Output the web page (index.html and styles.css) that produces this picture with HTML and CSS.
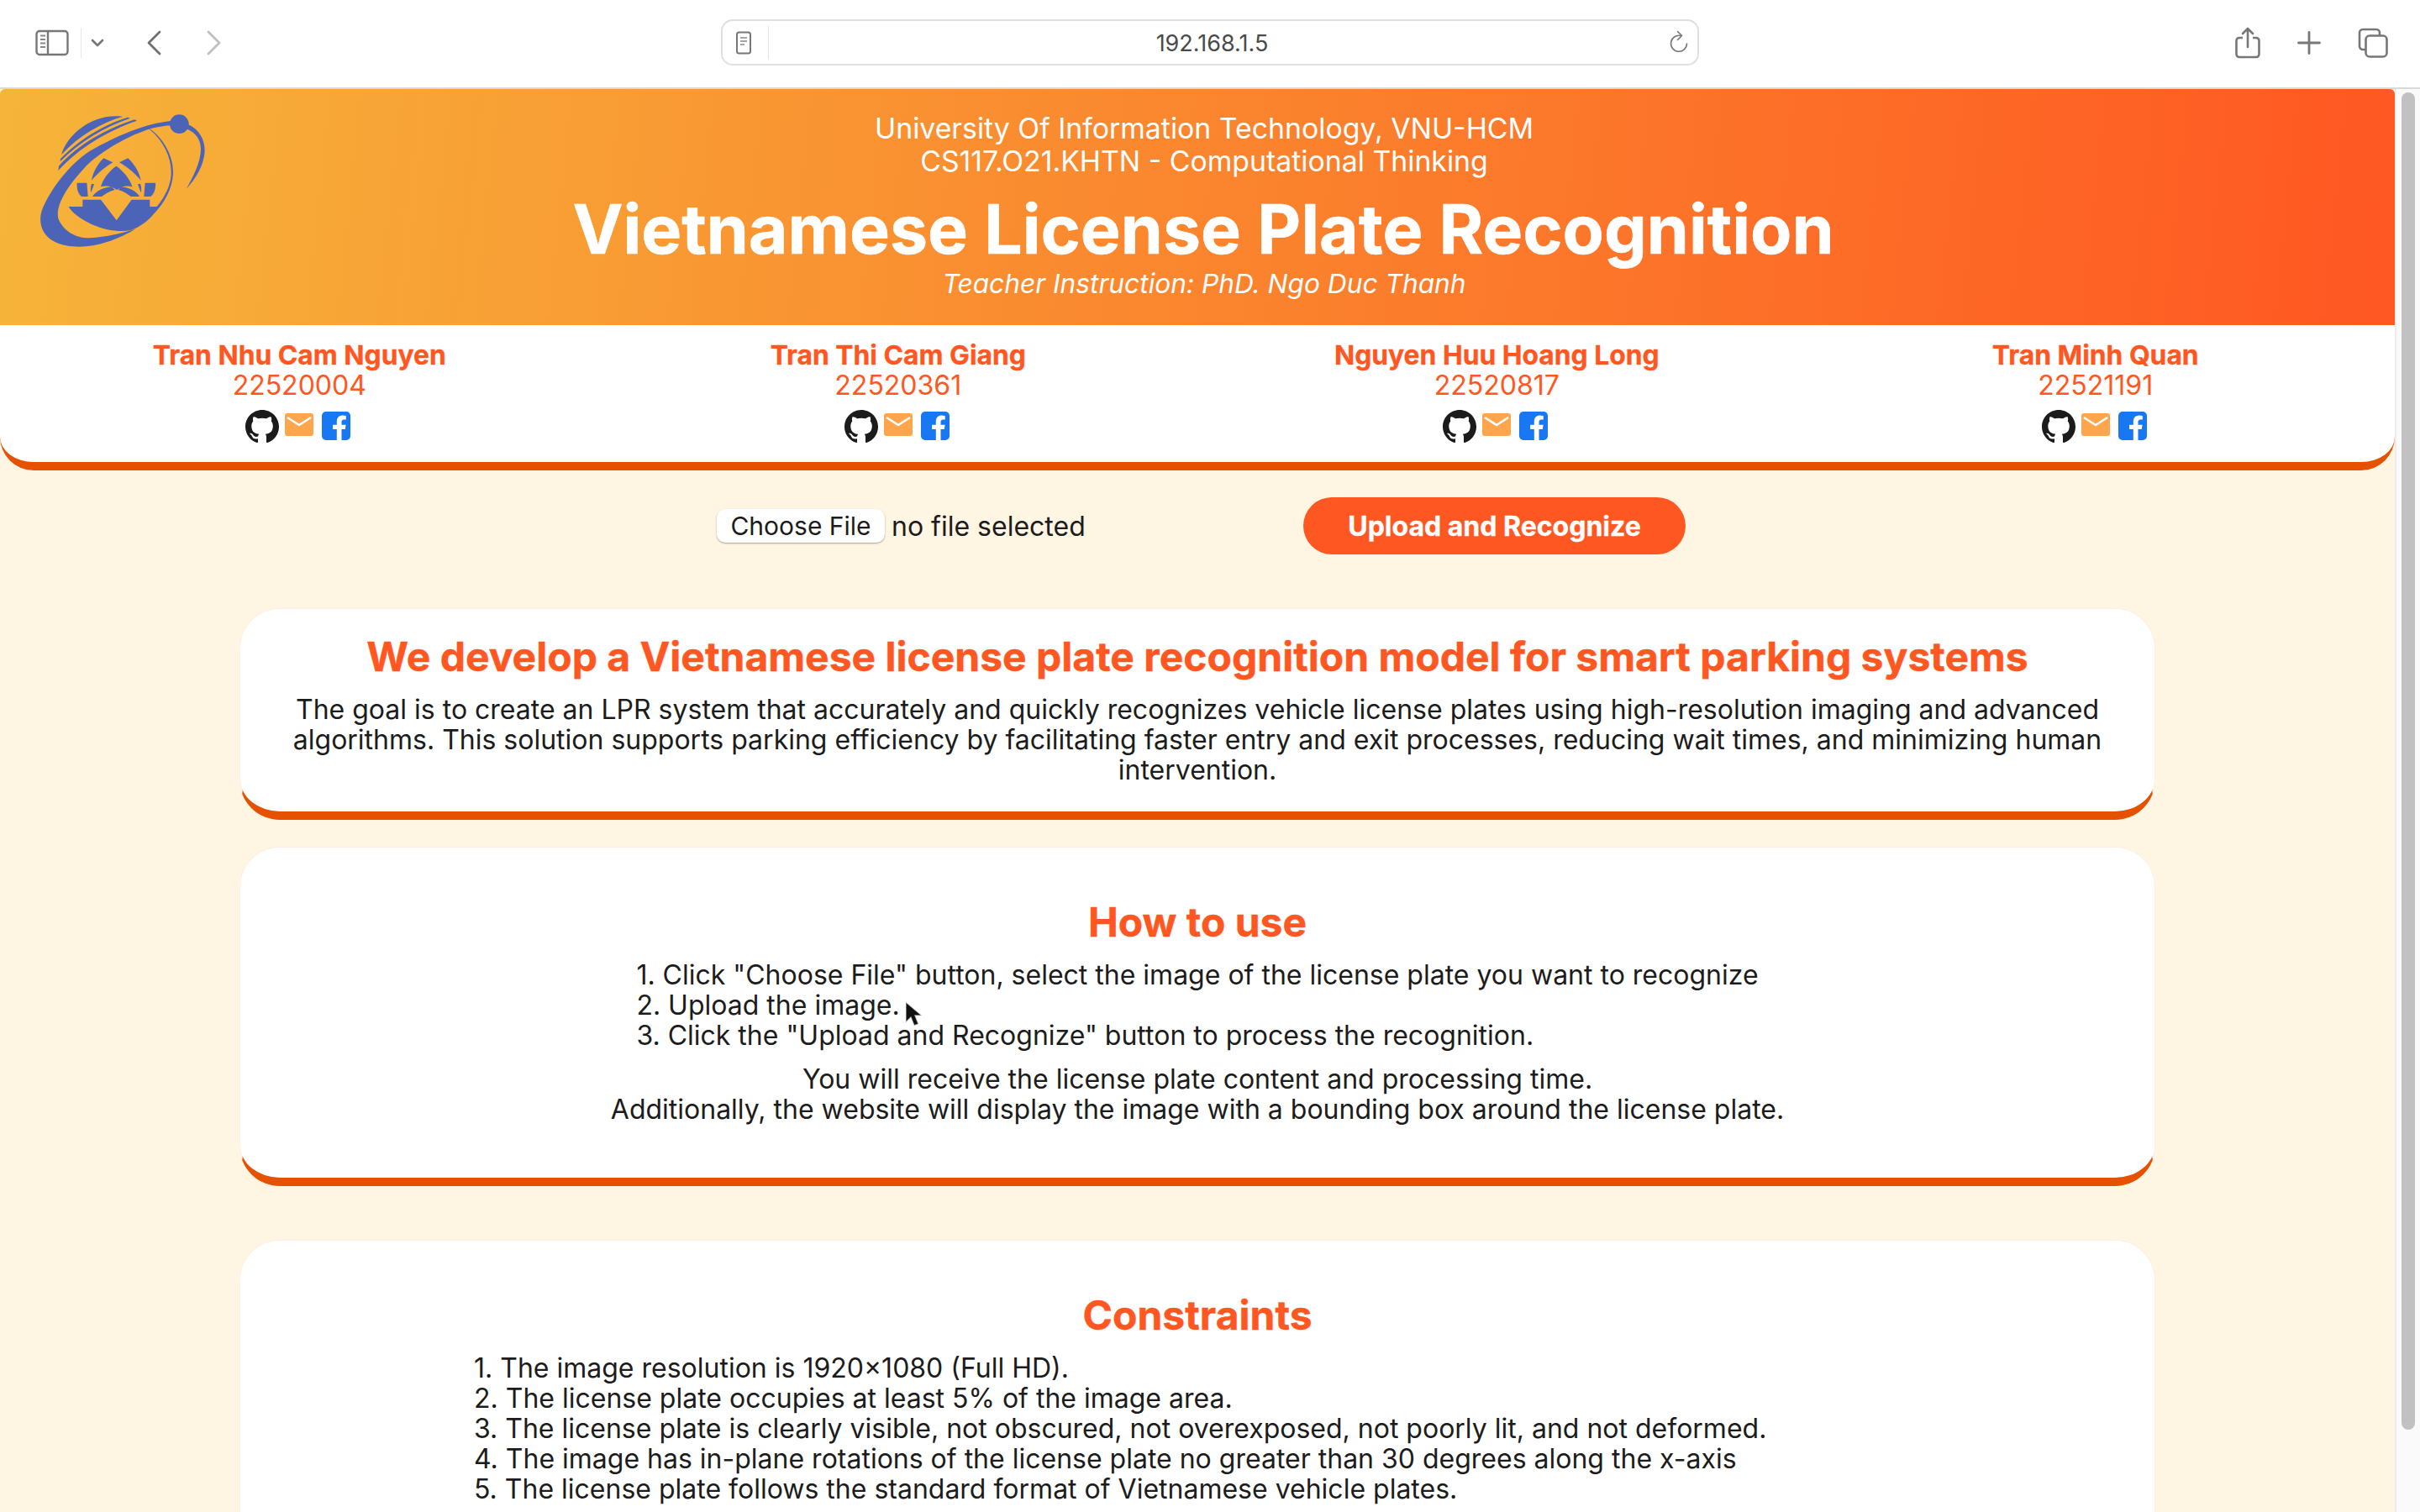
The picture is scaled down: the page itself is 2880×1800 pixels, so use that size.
FILE: index.html
```html
<!DOCTYPE html>
<html lang="en">
<head>
<meta charset="utf-8">
<title>Vietnamese License Plate Recognition</title>
<link rel="stylesheet" href="styles.css">
</head>
<body>
<div class="window">
  <div class="toolbar">
    <div class="tb-left">
      <svg class="ico-side" width="40" height="32" viewBox="0 0 40 32"><rect x="1.5" y="2" width="37" height="28" rx="3.5" fill="none" stroke="#777" stroke-width="2.4"/><path d="M15 2v28" stroke="#777" stroke-width="2.4"/><path d="M6 7.5h6M6 12h6M6 16.5h6M6 21h6" stroke="#888" stroke-width="1.8"/></svg>
      <span class="tb-sep"></span>
      <svg class="ico-chev" width="16" height="12" viewBox="0 0 16 12"><path d="M2 3l6 6 6-6" fill="none" stroke="#777" stroke-width="2.6" stroke-linecap="round" stroke-linejoin="round"/></svg>
      <svg class="ico-back" width="18" height="30" viewBox="0 0 18 30"><path d="M16 2L3 15l13 13" fill="none" stroke="#707070" stroke-width="2.8" stroke-linecap="round" stroke-linejoin="round"/></svg>
      <svg class="ico-fwd" width="18" height="30" viewBox="0 0 18 30"><path d="M2 2l13 13L2 28" fill="none" stroke="#c0c0c0" stroke-width="2.8" stroke-linecap="round" stroke-linejoin="round"/></svg>
    </div>
    <div class="urlbar">
      <svg class="ico-reader" width="18" height="28" viewBox="0 0 18 28"><rect x="1" y="1.5" width="16" height="25" rx="2.5" fill="none" stroke="#777" stroke-width="2"/><path d="M5 8h8M5 12h8M5 16h5" stroke="#888" stroke-width="1.5"/></svg>
      <span class="url-sep"></span>
      <span class="url-text">192.168.1.5</span>
      <svg class="ico-reload" width="24" height="30" viewBox="0 0 24 30"><path d="M14 6.5a9.5 9.5 0 1 0 7.5 9.5" fill="none" stroke="#777" stroke-width="1.6" stroke-linecap="round"/><path d="M10.5 1.5l5 5-5 5" fill="none" stroke="#777" stroke-width="1.6" stroke-linecap="round" stroke-linejoin="round"/></svg>
    </div>
    <div class="tb-right">
      <svg width="30" height="38" viewBox="0 0 30 38"><path d="M9 13H5a3.500 3.500 0 0 0-3.500 3.500v16A3.500 3.500 0 0 0 5 36h20a3.500 3.500 0 0 0 3.500-3.500v-16A3.500 3.500 0 0 0 25 13h-4" fill="none" stroke="#777" stroke-width="2.600"/><path d="M15 24V2M9 8l6-6 6 6" fill="none" stroke="#777" stroke-width="2.600" stroke-linecap="round" stroke-linejoin="round"/></svg>
      <svg width="28" height="28" viewBox="0 0 28 28"><path d="M14 1.500v25M1.500 14h25" stroke="#777" stroke-width="2.800" stroke-linecap="round"/></svg>
      <svg width="36" height="36" viewBox="0 0 36 36"><path d="M9 26H6a4 4 0 0 1-4-4V6a4 4 0 0 1 4-4h16a4 4 0 0 1 4 4v3" fill="none" stroke="#777" stroke-width="2.600"/><rect x="9.500" y="9.500" width="25" height="25" rx="4.500" fill="none" stroke="#777" stroke-width="2.600"/></svg>
    </div>
  </div>
  <div class="viewport">
    <main class="page">
      <header class="banner">
        <svg class="logo" viewBox="0 0 660 540" width="220" height="180">
          <g fill="#4b64b8">
            <path d="M490 57C400 66 300 108 200 165 130 210 60 300 30 375 15 420 30 465 75 488 125 513 200 510 260 490 300 478 340 458 365 442 320 458 260 472 200 475 150 476 105 450 88 405 78 360 115 295 190 215 250 160 340 108 420 84 455 76 475 74 490 73Z"/>
            <circle cx="520" cy="68" r="34"/>
            <path d="M552 70C590 85 612 125 611 165 608 215 580 262 545 300 570 255 596 205 597 158 597 122 578 98 548 86Z"/>
            <path d="M415 85C470 125 500 190 498 245 495 310 450 385 385 422L380 417C440 375 489 310 491 245 493 190 465 130 415 88Z"/>
            <path d="M99 178C118 110 205 28 318 41 240 65 160 110 99 178Z"/>
            <path d="M96 192C160 125 250 70 336 44L345 47C255 78 165 130 95 202Z"/>
            <path d="M90 218C160 140 260 85 360 52L369 56C265 92 165 150 88 234Z"/>
            <path d="M295 218C320 235 345 265 352 292 330 286 312 292 297 303 283 292 262 286 240 292 247 265 270 235 295 218Z"/>
            <path d="M250 190L283 205C250 225 222 250 207 270 212 240 228 212 250 190Z"/>
            <path d="M337 190L306 205C340 225 368 250 383 270 378 240 360 212 337 190Z"/>
            <path d="M155 278H190L194 327H172C160 320 153 300 155 278Z"/>
            <path d="M435 278H398L394 327H417C429 320 437 300 435 278Z"/>
            <path d="M207 281L216 283 205 313C202 302 204 290 207 281Z"/>
            <path d="M381 281L372 283 383 313C386 302 384 290 381 281Z"/>
            <path d="M210 327C225 305 250 295 278 292L290 303C270 308 255 318 243 327Z"/>
            <path d="M378 327C365 305 340 295 312 292L302 303C322 308 335 318 347 327Z"/>
            <path d="M125 363H175V338H240L296 412 350 338H415V363H445C430 395 395 430 345 448 300 455 250 445 205 425 170 408 140 388 125 363Z"/>
          </g>
        </svg>
        <p class="banner-line">University Of Information Technology, VNU-HCM</p>
        <p class="banner-line">CS117.O21.KHTN - Computational Thinking</p>
        <h1 class="banner-title">Vietnamese License Plate Recognition</h1>
        <p class="banner-teacher">Teacher Instruction: PhD. Ngo Duc Thanh</p>
      </header>
      <section class="team">
        <div class="member">
          <div class="member-name">Tran Nhu Cam Nguyen</div>
          <div class="member-id">22520004</div>
          <div class="member-links">
            <svg class="i-gh" viewBox="0 0 16 16"><path fill="#1b1b1b" d="M8 0C3.580 0 0 3.580 0 8c0 3.540 2.290 6.530 5.470 7.590.4.070.55-.17.55-.38 0-.19-.01-.82-.01-1.490-2.010.37-2.530-.49-2.690-.94-.09-.23-.48-.94-.82-1.130-.28-.15-.68-.52-.01-.53.63-.01 1.080.58 1.230.82.720 1.210 1.870.870 2.330.660.070-.520.280-.870.510-1.070-1.780-.2-3.640-.890-3.640-3.950 0-.870.310-1.590.820-2.150-.08-.2-.36-1.020.08-2.120 0 0 .670-.210 2.200.820.640-.180 1.320-.270 2-.270s1.360.09 2 .270c1.530-1.040 2.200-.820 2.200-.820.440 1.100.160 1.920.080 2.120.510.560.820 1.270.820 2.150 0 3.070-1.870 3.750-3.650 3.950.290.250.540.730.540 1.480 0 1.070-.010 1.930-.010 2.200 0 .210.150.460.550.380A8.010 8.010 0 0 0 16 8c0-4.420-3.580-8-8-8z"/></svg>
            <svg class="i-mail" viewBox="0 0 34 27"><rect width="34" height="27" rx="3" fill="#ffa64d"/><path d="M3 5l14 9 14-9" fill="none" stroke="#fff" stroke-width="2.600"/></svg>
            <svg class="i-fb" viewBox="0 0 34 34"><rect width="34" height="34" rx="5" fill="#1877f2"/><path fill="#fff" d="M23.500 34V21h4.300l.8-5.300h-5.100v-3.200c0-1.500.7-2.900 3-2.900h2.300V5c-1.400-.2-2.800-.4-4-.4-4.200 0-7 2.600-7 7.100v4h-4.700V21h4.700v13z"/></svg>
          </div>
        </div>
        <div class="member">
          <div class="member-name">Tran Thi Cam Giang</div>
          <div class="member-id">22520361</div>
          <div class="member-links">
            <svg class="i-gh" viewBox="0 0 16 16"><path fill="#1b1b1b" d="M8 0C3.580 0 0 3.580 0 8c0 3.540 2.290 6.530 5.470 7.590.4.070.55-.17.55-.38 0-.19-.01-.82-.01-1.490-2.010.37-2.530-.49-2.690-.94-.09-.23-.48-.94-.82-1.130-.28-.15-.68-.52-.01-.53.63-.01 1.080.58 1.230.82.720 1.210 1.870.870 2.330.660.070-.520.280-.870.510-1.070-1.780-.2-3.640-.890-3.640-3.950 0-.870.310-1.590.820-2.150-.08-.2-.36-1.020.08-2.120 0 0 .670-.210 2.200.820.640-.180 1.320-.270 2-.270s1.360.09 2 .270c1.530-1.040 2.200-.820 2.200-.820.440 1.100.160 1.920.080 2.120.510.560.820 1.270.820 2.150 0 3.070-1.870 3.750-3.650 3.950.290.250.540.730.540 1.480 0 1.070-.010 1.930-.010 2.200 0 .210.150.460.550.380A8.010 8.010 0 0 0 16 8c0-4.420-3.580-8-8-8z"/></svg>
            <svg class="i-mail" viewBox="0 0 34 27"><rect width="34" height="27" rx="3" fill="#ffa64d"/><path d="M3 5l14 9 14-9" fill="none" stroke="#fff" stroke-width="2.600"/></svg>
            <svg class="i-fb" viewBox="0 0 34 34"><rect width="34" height="34" rx="5" fill="#1877f2"/><path fill="#fff" d="M23.500 34V21h4.300l.8-5.300h-5.100v-3.200c0-1.500.7-2.900 3-2.900h2.300V5c-1.400-.2-2.800-.4-4-.4-4.200 0-7 2.600-7 7.100v4h-4.700V21h4.700v13z"/></svg>
          </div>
        </div>
        <div class="member">
          <div class="member-name">Nguyen Huu Hoang Long</div>
          <div class="member-id">22520817</div>
          <div class="member-links">
            <svg class="i-gh" viewBox="0 0 16 16"><path fill="#1b1b1b" d="M8 0C3.580 0 0 3.580 0 8c0 3.540 2.290 6.530 5.470 7.590.4.070.55-.17.55-.38 0-.19-.01-.82-.01-1.490-2.010.37-2.530-.49-2.690-.94-.09-.23-.48-.94-.82-1.130-.28-.15-.68-.52-.01-.53.63-.01 1.080.58 1.230.82.720 1.210 1.870.870 2.330.660.070-.520.280-.870.510-1.070-1.780-.2-3.640-.890-3.640-3.950 0-.870.310-1.590.820-2.150-.08-.2-.36-1.020.08-2.120 0 0 .670-.210 2.200.820.640-.180 1.320-.270 2-.270s1.360.09 2 .270c1.530-1.040 2.200-.820 2.200-.820.440 1.100.160 1.920.080 2.120.510.560.820 1.270.820 2.150 0 3.070-1.870 3.750-3.650 3.950.290.250.540.730.540 1.480 0 1.070-.010 1.930-.010 2.200 0 .210.150.460.550.380A8.010 8.010 0 0 0 16 8c0-4.420-3.580-8-8-8z"/></svg>
            <svg class="i-mail" viewBox="0 0 34 27"><rect width="34" height="27" rx="3" fill="#ffa64d"/><path d="M3 5l14 9 14-9" fill="none" stroke="#fff" stroke-width="2.600"/></svg>
            <svg class="i-fb" viewBox="0 0 34 34"><rect width="34" height="34" rx="5" fill="#1877f2"/><path fill="#fff" d="M23.500 34V21h4.300l.8-5.300h-5.100v-3.200c0-1.500.7-2.900 3-2.900h2.300V5c-1.400-.2-2.800-.4-4-.4-4.200 0-7 2.600-7 7.100v4h-4.700V21h4.700v13z"/></svg>
          </div>
        </div>
        <div class="member">
          <div class="member-name">Tran Minh Quan</div>
          <div class="member-id">22521191</div>
          <div class="member-links">
            <svg class="i-gh" viewBox="0 0 16 16"><path fill="#1b1b1b" d="M8 0C3.580 0 0 3.580 0 8c0 3.540 2.290 6.530 5.470 7.590.4.070.55-.17.55-.38 0-.19-.01-.82-.01-1.490-2.010.37-2.530-.49-2.690-.94-.09-.23-.48-.94-.82-1.130-.28-.15-.68-.52-.01-.53.63-.01 1.080.58 1.230.82.720 1.210 1.870.870 2.330.660.070-.520.280-.870.510-1.070-1.780-.2-3.640-.890-3.640-3.950 0-.870.310-1.590.820-2.150-.08-.2-.36-1.020.08-2.120 0 0 .670-.210 2.200.820.640-.180 1.320-.270 2-.270s1.360.09 2 .270c1.530-1.040 2.200-.820 2.200-.820.440 1.100.160 1.920.080 2.120.510.560.820 1.270.820 2.150 0 3.070-1.870 3.750-3.650 3.950.290.250.540.730.540 1.480 0 1.070-.010 1.930-.010 2.200 0 .210.150.460.550.380A8.010 8.010 0 0 0 16 8c0-4.420-3.580-8-8-8z"/></svg>
            <svg class="i-mail" viewBox="0 0 34 27"><rect width="34" height="27" rx="3" fill="#ffa64d"/><path d="M3 5l14 9 14-9" fill="none" stroke="#fff" stroke-width="2.600"/></svg>
            <svg class="i-fb" viewBox="0 0 34 34"><rect width="34" height="34" rx="5" fill="#1877f2"/><path fill="#fff" d="M23.500 34V21h4.300l.8-5.300h-5.100v-3.200c0-1.500.7-2.900 3-2.900h2.300V5c-1.400-.2-2.800-.4-4-.4-4.200 0-7 2.600-7 7.100v4h-4.700V21h4.700v13z"/></svg>
          </div>
        </div>
      </section>
      <form class="upload-row">
        <div class="file-field">
          <button type="button" class="file-btn">Choose File</button>
          <span class="file-status">no file selected</span>
        </div>
        <button type="button" class="upload-btn">Upload and Recognize</button>
      </form>
      <section class="card card-intro">
        <h2 class="card-title">We develop a Vietnamese license plate recognition model for smart parking systems</h2>
        <p class="card-text">The goal is to create an LPR system that accurately and quickly recognizes vehicle license plates using high-resolution imaging and advanced algorithms. This solution supports parking efficiency by facilitating faster entry and exit processes, reducing wait times, and minimizing human intervention.</p>
      </section>
      <section class="card card-howto">
        <h2 class="card-title">How to use</h2>
        <ol class="steps">
          <li>Click "Choose File" button, select the image of the license plate you want to recognize</li>
          <li>Upload the image.</li>
          <li>Click the "Upload and Recognize" button to process the recognition.</li>
        </ol>
        <p class="card-text">You will receive the license plate content and processing time.<br>Additionally, the website will display the image with a bounding box around the license plate.</p>
      </section>
      <section class="card card-limits">
        <h2 class="card-title">Constraints</h2>
        <ol class="steps steps-wide">
          <li>The image resolution is 1920×1080 (Full HD).</li>
          <li>The license plate occupies at least 5% of the image area.</li>
          <li>The license plate is clearly visible, not obscured, not overexposed, not poorly lit, and not deformed.</li>
          <li>The image has in-plane rotations of the license plate no greater than 30 degrees along the x-axis</li>
          <li>The license plate follows the standard format of Vietnamese vehicle plates.</li>
        </ol>
      </section>
    </main>
    <div class="scrollbar"><div class="thumb"></div></div>
  </div>
  <svg class="cursor" width="24" height="34" viewBox="0 0 24 34"><path d="M2 1v24l6-6 4 10 5-2-4-10h8z" fill="#111" stroke="#fff" stroke-opacity=".55" stroke-width="1.500"/></svg>
</div>
</body>
</html>
```

FILE: styles.css
```css
* { box-sizing: border-box; }
html, body { margin: 0; height: 100%; overflow: hidden; background: #fff; }
body { font-family: Inter, "Liberation Sans", sans-serif; color: #1c1c1c; }
p, h1, h2 { margin: 0; }

.window { position: relative; width: 2880px; height: 1800px; display: flex; flex-direction: column; overflow: hidden; }

.toolbar { flex: 0 0 106px; display: grid; grid-template-columns: 1fr 1164px 1fr; align-items: center; padding-bottom: 3px; background: #fff; border-bottom: 2px solid #d9d9d9; }
.tb-left { display: flex; align-items: center; padding-left: 42px; }
.tb-sep { width: 1px; height: 36px; margin-left: 14px; background: #e8e8e8; }
.ico-chev { margin-left: 11px; }
.ico-back { margin-left: 50px; }
.ico-fwd { margin-left: 54px; }
.tb-right { display: flex; align-items: center; justify-content: flex-end; gap: 44px; padding-right: 38px; }

.urlbar { position: relative; height: 55px; display: flex; align-items: center; border: 2px solid #e0e0e0; border-radius: 14px; padding: 0 10px 0 16px; }
.url-sep { width: 1px; height: 40px; margin-left: 20px; background: #e4e4e4; }
.url-text { flex: 1; text-align: center; font-size: 27px; color: #4a4a4a; padding: 2px 16px 0 0; }

.viewport { flex: 1; display: flex; min-height: 0; }
.page { flex: 0 0 2850px; background: #fff5e3; overflow: hidden; }

.scrollbar { flex: 0 0 30px; background: #fafafa; border-left: 2px solid #ececec; padding: 4px 6px 0 6px; }
.thumb { width: 16px; height: 1592px; background: #c1c1c1; border-radius: 8px; }

.banner { position: relative; height: 281px; padding: 28px 0 0 16px; background: linear-gradient(96deg, #f6b43a 0%, #ff5722 100%); color: #fff; text-align: center; border-radius: 6px 6px 0 0; }
.logo { position: absolute; left: 40px; top: 19px; }
.banner-line { font-size: 33.8px; line-height: 38.5px; }
.banner-title { font-size: 80.5px; font-weight: 700; line-height: 97px; margin: 13px 2px 0 0; -webkit-text-stroke: .6px #fff; }
.banner-teacher { font-size: 31.7px; line-height: 38px; font-style: italic; margin-top: -2px; }

.team { display: grid; grid-template-columns: repeat(4, 1fr); height: 173px; padding-top: 18px; background: #fff; border-bottom: 10px solid #e65100; border-radius: 0 0 40px 40px; text-align: center; color: #ff5722; }
.member-name { font-size: 31.8px; font-weight: 700; line-height: 36px; -webkit-text-stroke: .3px #ff5722; }
.member-id { font-size: 32px; line-height: 36px; }
.member-links { display: flex; justify-content: center; align-items: center; gap: 7px; margin-top: 10px; height: 42px; padding-right: 3px; }
.i-gh { width: 40px; height: 40px; }
.i-mail { width: 34px; height: 27px; margin-top: -5px; }
.i-fb { width: 34px; height: 34px; margin-left: 3px; margin-top: -3px; }

.upload-row { display: flex; justify-content: center; align-items: center; height: 68px; margin-top: 32px; padding-left: 9px; }
.file-field { width: 698px; display: flex; align-items: center; gap: 8px; font-size: 32px; }
.file-btn { width: 200px; height: 40px; padding: 0; font: inherit; font-size: 30px; color: #1c1c1c; background: #fff; border: 0; border-radius: 10px; box-shadow: 0 1px 2px rgba(0,0,0,.35); }
.upload-btn { width: 455px; height: 68px; border: 0; border-radius: 34px; background: #ff5722; color: #fff; font: inherit; font-size: 32px; font-weight: 700; -webkit-text-stroke: .3px #fff; }

.card { width: 2280px; margin: 0 auto; padding: 0 60px; background: #fff; text-align: center; border: 1px solid #ffeee6; border-bottom: 10px solid #e65100; border-radius: 48px; }
.card-title { font-size: 48px; font-weight: 700; line-height: 58px; color: #ff5722; -webkit-text-stroke: .4px #ff5722; }
.card-text { font-size: 32px; line-height: 36px; margin-top: 16px; }
.card-intro { margin-top: 64px; height: 252px; padding-top: 28px; }
.card-howto { margin-top: 32px; height: 404px; padding-top: 60px; }
.card-limits { margin-top: 64px; height: 600px; padding-top: 60px; }
.steps { width: fit-content; margin: 16px auto; padding: 0; list-style: none; counter-reset: step; text-align: left; font-size: 32px; line-height: 36px; }
.steps li { counter-increment: step; }
.steps li::before { content: counter(step) ". "; white-space: pre; }
.steps-wide { width: 1722px; }

.cursor { position: absolute; left: 1076px; top: 1192px; }
```
